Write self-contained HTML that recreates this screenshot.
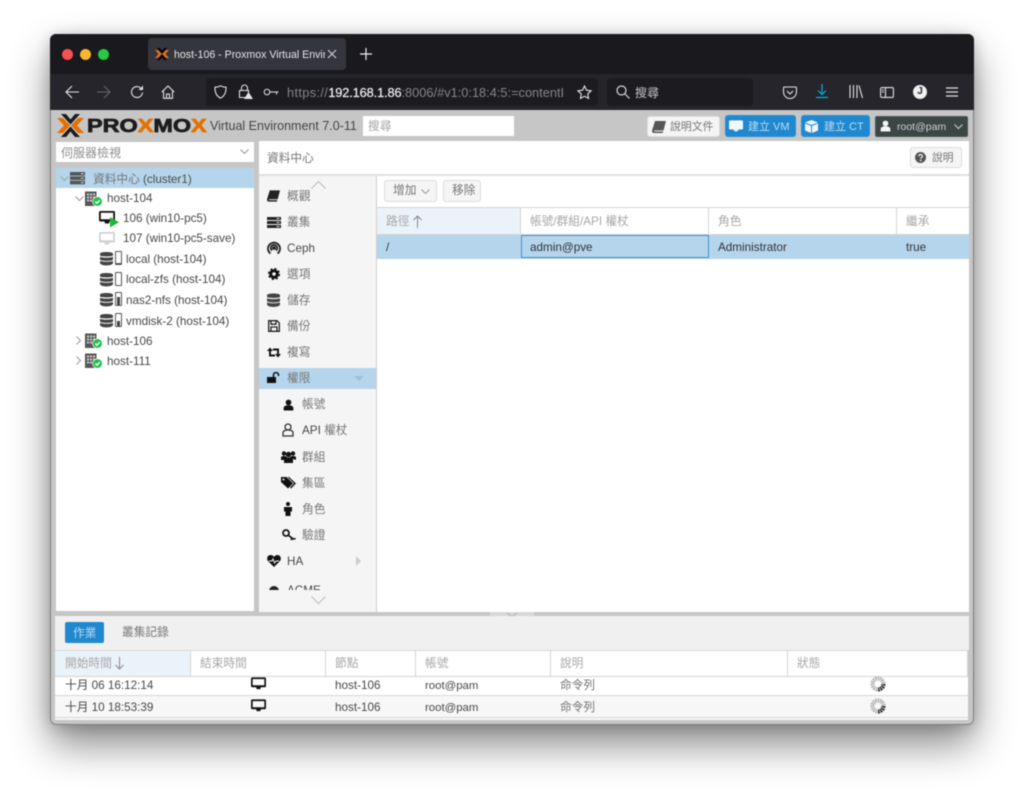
<!DOCTYPE html>
<html lang="zh-TW"><head><meta charset="utf-8"><title>Proxmox</title>
<style>
html,body{margin:0;padding:0;width:1024px;height:792px;overflow:hidden;background:#fff}
body{font-family:"Liberation Sans","Noto Sans CJK TC",sans-serif;font-size:11.7px;color:#484848}
.a,.t,svg.i{position:absolute}
.t{height:16px;line-height:16px;white-space:nowrap;margin-top:1px}
#win{position:absolute;left:50px;top:34px;width:924px;height:691px;border-radius:6px;box-shadow:0 20px 40px rgba(0,0,0,.46),0 2px 16px rgba(0,0,0,.2)}
#root{position:absolute;left:0;top:0;width:1024px;height:792px;filter:blur(.42px)}
.g{color:#8e8e8e}.m{color:#767676}
.btn{position:absolute;box-sizing:border-box;border:1px solid #ddd;border-radius:3px;background:#f5f5f5}
.blue{background:#2088cf;border:1px solid #2a8fd4;border-radius:3px;box-sizing:border-box;position:absolute}
</style></head><body>
<svg width="0" height="0" style="position:absolute">
<defs>
<symbol id="node" viewBox="0 0 18 16"><path d="M0 .5h11.500V15H0z" fill="#555"/><path d="M2 2.500h2v2H2zM5 2.500h2v2H5zM8 2.500h2v2H8zM2 5.500h2v2H2zM5 5.500h2v2H5zM8 5.500h2v2H8zM2 8.500h2v2H2zM5 8.500h2v2H5z" fill="#ccc"/><circle cx="12.500" cy="10.500" r="5.200" fill="#fff"/><circle cx="12.500" cy="10.500" r="4.500" fill="#21bf4b"/><path d="M10.300 10.500l1.700 1.700 2.800-3" fill="none" stroke="#fff" stroke-width="1.400"/></symbol>
<symbol id="db" viewBox="0 0 14 15"><path d="M0 2.300C0 -.1 14 -.1 14 2.300v1.900C14 5.700 0 5.700 0 4.200zM0 5.600c2 1.300 12 1.300 14 0v3.100c-1 1.800-13 1.800-14 0zM0 10c2 1.300 12 1.300 14 0v2.500c-1 3.300-13 3.300-14 0z" fill="#444"/></symbol>
<symbol id="mon" viewBox="0 0 16 13"><path d="M1.500 0h13A1.500 1.500 0 0 1 16 1.500V9a1.500 1.500 0 0 1-1.500 1.500H10.500L10 12.500H6l-.5-2H1.500A1.500 1.500 0 0 1 0 9V1.500A1.500 1.500 0 0 1 1.500 0zM1.800 1.800V8.300h12.400V1.800z" fill="#111" fill-rule="evenodd"/></symbol>
<symbol id="spin" viewBox="0 0 16 16"><circle cx="8" cy="8" r="5.500" fill="none" stroke="#b4b4b4" stroke-width="4.200" stroke-dasharray="1.600 .7"/><path d="M13.500 8A5.500 5.500 0 0 1 8 13.500" fill="none" stroke="#333" stroke-width="4.200" stroke-dasharray="1.600 .7"/></symbol>
<symbol id="user" viewBox="0 0 12 12"><circle cx="6" cy="3.200" r="3.100" fill="currentColor"/><path d="M.7 12V9.300C.7 7.300 3 6.300 6 6.300s5.300 1 5.300 3V12z" fill="currentColor"/></symbol>
<symbol id="book" viewBox="0 0 14 12"><path d="M3 0h11l-2.500 9.500H2.800c-1 0-1 1 0 1H11L10.800 12H2C.3 12-.3 10.500.2 9z" fill="currentColor"/></symbol>
</defs></svg>

<div id="root">
<div id="win"></div>
<div class="a" style="left:50px;top:34px;width:924px;height:691px;border-radius:6px;overflow:hidden;background:#c6c6c6;box-shadow:inset 0 0 0 1px rgba(80,80,80,.6)">
<div class="a" style="left:0;top:0;width:924px;height:40px;background:#19191e"></div>
<div class="a" style="left:0;top:40px;width:924px;height:36px;background:#25252b"></div>
</div>

<!-- traffic -->
<div class="a" style="left:62px;top:48.500px;width:11px;height:11px;border-radius:50%;background:#fb5050"></div>
<div class="a" style="left:80px;top:48.500px;width:11px;height:11px;border-radius:50%;background:#fcb62a"></div>
<div class="a" style="left:98px;top:48.500px;width:11px;height:11px;border-radius:50%;background:#27c93f"></div>
<!-- tab -->
<div class="a" style="left:148px;top:38px;width:198px;height:32px;background:#35353d;border-radius:4px"></div>
<svg class="i" style="left:155px;top:48px" width="14" height="12" viewBox="0 0 27 23"><path d="M0 4h6l7 7.500-7 7.500H0l7-7.500zM27 4h-6l-7 7.500 7 7.500h6l-7-7.500z" fill="#e8711a"/><path d="M4 0h5l4.500 5.500L18 0h5l-9.500 10.500zM4 23h5l4.500-5.500L18 23h5l-9.500-10.500z" fill="#000"/></svg>
<div class="t" style="left:174px;top:47px;margin-top:0;width:151px;overflow:hidden;color:#e6e6e8;font-size:10.600px">host-106 - Proxmox Virtual Envir</div>
<svg class="i" style="left:327px;top:49px" width="10" height="10"><path d="M1 1l8 8M9 1l-8 8" stroke="#d8d8da" stroke-width="1"/></svg>
<svg class="i" style="left:360px;top:48px" width="12" height="12"><path d="M6 0v12M0 6h12" stroke="#f0f0f2" stroke-width="1.200"/></svg>

<!-- nav -->
<svg class="i" style="left:65px;top:85px" width="14" height="14" fill="none" stroke="#e4e4e6" stroke-width="1.100"><path d="M14 7H1M7 1L1 7l6 6"/></svg>
<svg class="i" style="left:97px;top:85px" width="14" height="14" fill="none" stroke="#66666b" stroke-width="1.100"><path d="M0 7h13M7 1l6 6-6 6"/></svg>
<svg class="i" style="left:130px;top:85px" width="14" height="14" fill="none" stroke="#e4e4e6" stroke-width="1.100"><path d="M12.500 7.500A5.500 5.500 0 1 1 10.500 2.800"/><path d="M13 .5v4.500H8.500" fill="#e4e4e6" stroke="none"/></svg>
<svg class="i" style="left:161px;top:85px" width="14" height="14" fill="none" stroke="#e4e4e6" stroke-width="1.100"><path d="M.8 7L7 1l6.200 6M2.500 6v7.300h9V6M5.500 13.300V9h3v4.300"/></svg>
<div class="a" style="left:206px;top:78px;width:392px;height:28px;background:#1b1b20;border-radius:4px"></div>
<svg class="i" style="left:214px;top:85px" width="13" height="14" fill="none" stroke="#e4e4e6" stroke-width="1.100"><path d="M1 2.200Q4 2.200 6.500 .8 9 2.200 12 2.200 12.500 10 6.500 13.200 .5 10 1 2.200z"/></svg>
<svg class="i" style="left:238px;top:84px" width="15" height="15"><path d="M3.500 6V4a3 3 0 0 1 6 0v2M1.500 6.500h9v7h-9z" fill="none" stroke="#e4e4e6" stroke-width="1.100"/><path d="M10.500 8L15 15H6z" fill="#e4e4e6"/></svg>
<svg class="i" style="left:263px;top:88px" width="16" height="8" fill="none" stroke="#e4e4e6" stroke-width="1"><circle cx="4" cy="4" r="2.800"/><path d="M7 4h8.500M13.500 4v2.500"/></svg>
<div class="t" style="left:287px;top:85px;margin-top:0;width:284px;overflow:hidden;font-size:12.800px;color:#85858a;line-height:16px"><span style="letter-spacing:.35px">https://</span><span style="color:#f0f0f2;font-weight:400;-webkit-text-stroke:.2px #f0f0f2;letter-spacing:-.12px">192.168.1.86</span>:8006/#v1:0:18:4:5:=contentI</div>
<svg class="i" style="left:577px;top:85px" width="15" height="14" fill="none" stroke="#e4e4e6" stroke-width="1.100"><path d="M7.500 1l2 4.200 4.600.6-3.400 3.200.9 4.500-4.100-2.300-4.100 2.300.9-4.500L.9 5.800l4.600-.6z"/></svg>
<div class="a" style="left:607px;top:78px;width:146px;height:28px;background:#1b1b20;border-radius:4px"></div>
<svg class="i" style="left:616px;top:85px" width="14" height="14" fill="none" stroke="#d8d8da" stroke-width="1.200"><circle cx="5.500" cy="5.500" r="4.500"/><path d="M9 9l4.500 4.500"/></svg>
<div class="t" style="left:635px;top:84px;color:#c8c8ca;font-size:12px">搜尋</div>
<svg class="i" style="left:783px;top:86px" width="14" height="13" fill="none" stroke="#e4e4e6" stroke-width="1.100"><path d="M1.500 1h11a1 1 0 0 1 1 1v4A6.500 6.500 0 0 1 .5 6V2a1 1 0 0 1 1-1z"/><path d="M4 5l3 3 3-3"/></svg>
<svg class="i" style="left:815px;top:84px" width="14" height="15" fill="none" stroke="#00b3d9" stroke-width="1.200"><path d="M7 0v10M3 6.500l4 4 4-4M1 13.500h12"/></svg>
<svg class="i" style="left:849px;top:85px" width="14" height="13" fill="none" stroke="#e4e4e6" stroke-width="1.100"><path d="M1 0v13M4.500 0v13M8 0v13M10 .5l3.500 12.500"/></svg>
<svg class="i" style="left:880px;top:87px" width="14" height="11" fill="none" stroke="#e4e4e6" stroke-width="1.100"><rect x=".6" y=".6" width="12.800" height="9.800" rx="1.200"/><path d="M5.500 .6v9.800M2 3h2M2 5h2"/></svg>
<div class="a" style="left:913px;top:85px;width:14px;height:14px;border-radius:50%;background:#f0f0f2;color:#25252b;font:bold 10px/14px 'Liberation Sans',sans-serif;text-align:center">J</div>
<svg class="i" style="left:946px;top:87px" width="12" height="10" fill="none" stroke="#e4e4e6" stroke-width="1.200"><path d="M0 1h12M0 5h12M0 9h12"/></svg>

<!-- PVE header -->
<svg class="i" style="left:57px;top:114px" width="27" height="23" viewBox="0 0 27 23"><path d="M0 4h6l7 7.500-7 7.500H0l7-7.500zM27 4h-6l-7 7.500 7 7.500h6l-7-7.500z" fill="#e57000"/><path d="M4 0h5l4.500 5.500L18 0h5l-9.500 10.500zM4 23h5l4.500-5.500L18 23h5l-9.500-10.500z" fill="#1c1c1c"/></svg>
<div class="t" style="left:87px;top:115px;margin-top:0;height:22px;line-height:22px;font-size:18px;font-weight:bold;color:#1c1c1c;transform:scaleX(1.300);transform-origin:0 50%;-webkit-text-stroke:.7px currentColor">PRO<span style="color:#e57000">X</span>MO<span style="color:#e57000">X</span></div>
<div class="t" style="left:210px;top:118px;margin-top:0;font-size:12.500px;color:#444">Virtual Environment 7.0-11</div>
<div class="a" style="left:363px;top:116px;width:151px;height:20px;background:#fff"></div>
<div class="t" style="left:368px;top:118px;color:#a5a5a5">搜尋</div>

<div class="btn" style="left:647px;top:116px;width:73px;height:21px"></div>
<svg class="i" style="left:652px;top:121px;color:#555" width="14" height="12"><use href="#book"/></svg>
<div class="t m" style="left:670px;top:118px;font-size:10.900px">說明文件</div>
<div class="blue" style="left:725px;top:115px;width:71px;height:22px"></div>
<svg class="i" style="left:729px;top:120px" width="14" height="12" viewBox="0 0 16 13"><path d="M1.500 0h13A1.500 1.500 0 0 1 16 1.500V9a1.500 1.500 0 0 1-1.500 1.500H10.500L10 12.500H6l-.5-2H1.500A1.500 1.500 0 0 1 0 9V1.500A1.500 1.500 0 0 1 1.500 0z" fill="#f2f7fb"/></svg>
<div class="t" style="left:748px;top:118px;color:#bcdcf2;font-size:11px">建立 VM</div>
<div class="blue" style="left:801px;top:115px;width:69px;height:22px"></div>
<svg class="i" style="left:805px;top:120px" width="13" height="13" viewBox="0 0 13 13"><path d="M6.500 0L13 2.500 6.500 5 0 2.500zM0 3.500L6 6v7L0 10.500zM13 3.500L7 6v7l6-2.500z" fill="#f2f7fb"/></svg>
<div class="t" style="left:824px;top:118px;color:#bcdcf2;font-size:11px">建立 CT</div>
<div class="a" style="left:875px;top:116px;width:93px;height:21px;background:#3b4645;border:1px solid #4c5857;box-sizing:border-box;border-radius:2px"></div>
<svg class="i" style="left:880px;top:120px;color:#f5f5f5" width="11" height="12"><use href="#user"/></svg>
<div class="t" style="left:897px;top:118px;color:#cfcfcf;font-size:10.500px">root@pam</div>
<svg class="i" style="left:954px;top:124px" width="9" height="6" fill="none" stroke="#cfcfcf"><path d="M.5 .5L4.500 4.500 8.500 .5"/></svg>

<!-- left -->
<div class="a" style="left:56px;top:142px;width:198px;height:20px;background:#fff"></div>
<div class="t g" style="left:61px;top:144px;font-size:12px">伺服器檢視</div>
<svg class="i" style="left:240px;top:149px" width="9" height="6" fill="none" stroke="#999"><path d="M.5 .5L4.500 4.500 8.500 .5"/></svg>
<div class="a" style="left:56px;top:168px;width:198px;height:443px;background:#fff"></div>
<div class="a" style="left:56px;top:168px;width:198px;height:20px;background:#b5d5ec"></div>
<svg class="i" style="left:60px;top:176px" width="9" height="6" fill="none" stroke="#8aa"><path d="M.5 .5L4.500 4.500 8.500 .5"/></svg>
<svg class="i" style="left:70px;top:172px" width="15" height="13"><path d="M0 0h15v3.600H0zM0 4.400h15V8H0zM0 8.800h15v3.600H0z" fill="#555"/><path d="M11 1.800h2.500M11 6.200h2.500M11 10.600h2.500" stroke="#ddd"/></svg>
<div class="t" style="left:93px;top:171px;color:#4c4c4c"><span class="m">資料中心</span> (cluster1)</div>

<svg class="i" style="left:75px;top:196px" width="9" height="6" fill="none" stroke="#999"><path d="M.5 .5L4.500 4.500 8.500 .5"/></svg>
<svg class="i" style="left:85px;top:191px" width="18" height="16"><use href="#node"/></svg>
<div class="t" style="left:107px;top:190px">host-104</div>

<svg class="i" style="left:99px;top:211px" width="16" height="13"><use href="#mon"/></svg>
<svg class="i" style="left:110px;top:217px" width="9" height="11"><path d="M0 0l9 5.200L0 10.500z" fill="#1eb53a"/></svg>
<div class="t" style="left:123px;top:210px">106 (win10-pc5)</div>
<svg class="i" style="left:99px;top:232px" width="16" height="13" viewBox="0 0 16 13"><path d="M1.500 0h13A1.500 1.500 0 0 1 16 1.500V9a1.500 1.500 0 0 1-1.500 1.500H10.500L10 12.500H6l-.5-2H1.500A1.500 1.500 0 0 1 0 9V1.500A1.500 1.500 0 0 1 1.500 0zM1.800 1.800V8.300h12.400V1.800z" fill="#d2d2d2" fill-rule="evenodd"/></svg>
<div class="t" style="left:123px;top:230px">107 (win10-pc5-save)</div>

<svg class="i" style="left:100px;top:251px" width="13" height="15"><use href="#db"/></svg>
<div class="a" style="left:115px;top:251px;width:7px;height:14px;box-sizing:border-box;border:1px solid #555;border-radius:1px"></div><div class="a" style="left:116px;top:263px;width:5px;height:1px;background:#555"></div>
<div class="t" style="left:126px;top:251px">local (host-104)</div>
<svg class="i" style="left:100px;top:272px" width="13" height="15"><use href="#db"/></svg>
<div class="a" style="left:115px;top:272px;width:7px;height:14px;box-sizing:border-box;border:1px solid #555;border-radius:1px"></div>
<div class="t" style="left:126px;top:271px">local-zfs (host-104)</div>
<svg class="i" style="left:100px;top:292px" width="13" height="15"><use href="#db"/></svg>
<div class="a" style="left:115px;top:292px;width:7px;height:14px;box-sizing:border-box;border:1px solid #555;border-radius:1px"></div><div class="a" style="left:117px;top:297px;width:3px;height:8px;background:#444"></div>
<div class="t" style="left:126px;top:292px">nas2-nfs (host-104)</div>
<svg class="i" style="left:100px;top:313px" width="13" height="15"><use href="#db"/></svg>
<div class="a" style="left:115px;top:313px;width:7px;height:14px;box-sizing:border-box;border:1px solid #555;border-radius:1px"></div><div class="a" style="left:117px;top:321px;width:3px;height:5px;background:#444"></div>
<div class="t" style="left:126px;top:313px">vmdisk-2 (host-104)</div>

<svg class="i" style="left:76px;top:336px" width="6" height="10" fill="none" stroke="#999"><path d="M.5 .5L4.500 4.500 .5 8.500"/></svg>
<svg class="i" style="left:85px;top:333px" width="18" height="16"><use href="#node"/></svg>
<div class="t" style="left:107px;top:333px">host-106</div>
<svg class="i" style="left:76px;top:356px" width="6" height="10" fill="none" stroke="#999"><path d="M.5 .5L4.500 4.500 .5 8.500"/></svg>
<svg class="i" style="left:85px;top:353px" width="18" height="16"><use href="#node"/></svg>
<div class="t" style="left:107px;top:353px">host-111</div>

<!-- main panel -->
<div class="a" style="left:259px;top:141px;width:710px;height:471px;background:#fff"></div>
<div class="a" style="left:259px;top:174px;width:710px;height:2px;background:#dedede"></div>
<div class="t m" style="left:267px;top:150px">資料中心</div>
<div class="btn" style="left:910px;top:147px;width:52px;height:21px"></div>
<svg class="i" style="left:915px;top:152px" width="11" height="11"><circle cx="5.500" cy="5.500" r="5.500" fill="#555"/><path d="M3.800 4.300c0-2.300 3.600-2.300 3.600 0 0 1.300-1.700 1.300-1.700 2.500" fill="none" stroke="#fff" stroke-width="1.100"/><path d="M5 7.700h1.400v1.400H5z" fill="#fff"/></svg>
<div class="t m" style="left:932px;top:149px;font-size:10.800px">說明</div>

<!-- sidebar -->
<div class="a" style="left:259px;top:176px;width:117px;height:436px;background:#f5f5f5"></div>
<div class="a" style="left:376px;top:176px;width:1px;height:436px;background:#cfcfcf"></div>
<div class="a" style="left:259px;top:368px;width:117px;height:21px;background:#b5d5ec"></div>
<svg class="i" style="left:311px;top:181px" width="15" height="8" fill="none" stroke="#bbb"><path d="M.5 7.500L7.500 .5l7 7"/></svg>
<svg class="i" style="left:267px;top:190px;color:#222" width="13" height="12"><use href="#book"/></svg>
<div class="t m" style="left:287px;top:188px">概觀</div>
<svg class="i" style="left:267px;top:217px" width="14" height="11"><path d="M0 0h14v3H0zM0 4h14v3H0zM0 8h14v3H0z" fill="#222"/><path d="M9.500 1.500h3M9.500 5.500h3M9.500 9.500h3" stroke="#ddd" stroke-width=".9"/></svg>
<div class="t m" style="left:287px;top:214px">叢集</div>
<svg class="i" style="left:267px;top:241px" width="14" height="14" fill="none" stroke="#222" stroke-width="1.800"><path d="M3.500 12.500a6 6 0 1 1 7 0"/><path d="M5 9.500a3.200 3.200 0 1 1 4 0"/><circle cx="7" cy="7" r="1" fill="#222"/></svg>
<div class="t" style="left:287px;top:240px">Ceph</div>
<svg class="i" style="left:268px;top:268px" width="12" height="12"><circle cx="6" cy="6" r="3.300" fill="none" stroke="#111" stroke-width="3"/><circle cx="6" cy="6" r="5.300" fill="none" stroke="#111" stroke-width="1.500" stroke-dasharray="2.200 2"/></svg>
<div class="t m" style="left:287px;top:266px">選項</div>
<svg class="i" style="left:267px;top:293px" width="13" height="14"><use href="#db"/></svg>
<div class="t m" style="left:287px;top:292px">儲存</div>
<svg class="i" style="left:268px;top:320px" width="12" height="12" fill="none" stroke="#222" stroke-width="1.300"><path d="M.7 .7h8.300l2.300 2.300v8.300H.7z"/><path d="M3 .7v3.500h5V.7M3 11.300V7h6v4.300"/></svg>
<div class="t m" style="left:287px;top:318px">備份</div>
<svg class="i" style="left:267px;top:347px" width="14" height="11" fill="none" stroke="#111" stroke-width="1.900"><path d="M3 3v5.500h5M11 8V2.500H6"/><path d="M0 4l3-3.500 3 3.500zM8 7l3 3.500 3-3.500z" fill="#111" stroke="none"/></svg>
<div class="t m" style="left:287px;top:344px">複寫</div>
<svg class="i" style="left:267px;top:372px" width="13" height="11"><path d="M0 5h9v6H0z" fill="#111"/><path d="M6.500 5V3a2.500 2.500 0 0 1 5 0v1" fill="none" stroke="#111" stroke-width="1.500"/></svg>
<div class="t m" style="left:287px;top:370px">權限</div>
<svg class="i" style="left:354px;top:376px" width="10" height="6"><path d="M0 0h10L5 5z" fill="#9fc0d8"/></svg>

<svg class="i" style="left:283px;top:399px;color:#111" width="11" height="12"><use href="#user"/></svg>
<div class="t m" style="left:302px;top:396px">帳號</div>
<svg class="i" style="left:282px;top:423px" width="12" height="14" fill="none" stroke="#333" stroke-width="1.300"><circle cx="6" cy="4" r="3"/><path d="M1 13V10c0-2 2-3 5-3s5 1 5 3v3z"/></svg>
<div class="t" style="left:302px;top:422px"><span>API</span> <span class="m">權杖</span></div>
<svg class="i" style="left:281px;top:451px" width="15" height="12"><circle cx="3" cy="2.500" r="2.200" fill="#111"/><circle cx="12" cy="2.500" r="2.200" fill="#111"/><circle cx="7.500" cy="3.500" r="2.700" fill="#111"/><path d="M0 9V6.500c0-1 1-1.500 3-1.500s3 .5 3 2v2zM9 7c0-1.500 1-2 3-2s3 .5 3 1.500V9z" fill="#111"/><path d="M3 12V8.500C3 7 5 6.500 7.500 6.500S12 7 12 8.500V12z" fill="#111"/></svg>
<div class="t m" style="left:302px;top:449px">群組</div>
<svg class="i" style="left:281px;top:477px" width="15" height="12"><path d="M0 0h5.500l6.500 6.500L7 11.500 0 5z" fill="#111"/><path d="M8 0l7 6.500-5 5-1-1L13 6.500 6.500 0z" fill="#111"/><circle cx="2.500" cy="2.500" r="1" fill="#f5f5f5"/></svg>
<div class="t m" style="left:302px;top:475px">集區</div>
<svg class="i" style="left:284px;top:502px" width="8" height="14"><circle cx="4" cy="2" r="2" fill="#111"/><path d="M0 5h8v4.500H6.500V14h-5V9.500H0z" fill="#111"/></svg>
<div class="t m" style="left:302px;top:501px">角色</div>
<svg class="i" style="left:282px;top:529px" width="14" height="12" fill="none" stroke="#111" stroke-width="1.700"><circle cx="4" cy="4" r="3"/><path d="M6 6l6 4.500M10 9l-1 2M12.500 10.500l.5-1.500"/></svg>
<div class="t m" style="left:302px;top:527px">驗證</div>
<svg class="i" style="left:267px;top:555px" width="14" height="12"><path d="M7 12L1 6C-1 3 1 0 3.500 0 5 0 6 .5 7 2c1-1.500 2-2 3.500-2C13 0 15 3 13 6z" fill="#111"/><path d="M2 6h3l1-2 1.500 4L9 6h3" fill="none" stroke="#f5f5f5"/></svg>
<div class="t" style="left:287px;top:553px">HA</div>
<svg class="i" style="left:356px;top:556px" width="6" height="10"><path d="M0 0l5 5-5 5z" fill="#ccc"/></svg>
<div class="a" style="left:259px;top:576px;width:117px;height:14px;overflow:hidden"><div class="t" style="left:28px;top:6px">ACME</div><svg class="i" style="left:9px;top:9px" width="12" height="12"><circle cx="6" cy="6" r="5" fill="#222"/></svg></div>
<svg class="i" style="left:311px;top:596px" width="15" height="9" fill="none" stroke="#bbb"><path d="M.5 .5l7 7 7-7"/></svg>

<!-- grid -->
<div class="btn" style="left:384px;top:180px;width:53px;height:22px"></div>
<div class="t m" style="left:393px;top:182px">增加</div>
<svg class="i" style="left:421px;top:189px" width="9" height="6" fill="none" stroke="#999"><path d="M.5 .5L4.500 4.500 8.500 .5"/></svg>
<div class="btn" style="left:443px;top:180px;width:38px;height:22px"></div>
<div class="t m" style="left:452px;top:182px">移除</div>
<div class="a" style="left:377px;top:207px;width:592px;height:1px;background:#d4d4d4"></div>
<div class="a" style="left:377px;top:208px;width:143px;height:26px;background:#eaf3fa"></div>
<div class="a" style="left:520px;top:208px;width:1px;height:26px;background:#d4d4d4"></div>
<div class="a" style="left:708px;top:208px;width:1px;height:26px;background:#d4d4d4"></div>
<div class="a" style="left:896px;top:208px;width:1px;height:26px;background:#d4d4d4"></div>
<div class="a" style="left:377px;top:234px;width:592px;height:1px;background:#d4d4d4"></div>
<div class="t" style="left:386px;top:213px;color:#a6a6a6">路徑</div>
<svg class="i" style="left:413px;top:215px" width="9" height="13" fill="none" stroke="#888"><path d="M4.500 13V1M.5 5l4-4 4 4"/></svg>
<div class="t" style="left:530px;top:213px;color:#a6a6a6">帳號/群組/API 權杖</div>
<div class="t" style="left:718px;top:213px;color:#a6a6a6">角色</div>
<div class="t" style="left:906px;top:213px;color:#a6a6a6">繼承</div>
<div class="a" style="left:377px;top:235px;width:592px;height:24px;background:#b5d5ec"></div>
<div class="a" style="left:521px;top:235px;width:188px;height:23px;box-sizing:border-box;border:1px solid #3a92d2"></div>
<div class="t" style="left:386px;top:239px;color:#333">/</div>
<div class="t" style="left:530px;top:239px;color:#333">admin@pve</div>
<div class="t" style="left:718px;top:239px;color:#333">Administrator</div>
<div class="t" style="left:906px;top:239px;color:#333">true</div>

<!-- splitter -->
<div class="a" style="left:490px;top:612px;width:44px;height:4px;background:#d8d8d8"></div>
<svg class="i" style="left:507px;top:613px" width="10" height="4"><path d="M0 0l5 3.500L10 0" fill="none" stroke="#aaa"/></svg>

<!-- bottom -->
<div class="a" style="left:55px;top:616px;width:914px;height:34px;background:#f0f0f0"></div>
<div class="a" style="left:65px;top:622px;width:39px;height:21px;background:#2088cf;border-radius:2px"></div>
<div class="t" style="left:73px;top:625px;color:#b8daf1">作業</div>
<div class="t m" style="left:122px;top:624px">叢集記錄</div>
<div class="a" style="left:55px;top:650px;width:913px;height:27px;background:#fff;border-top:1px solid #d8d8d8;border-bottom:1px solid #d4d4d4;box-sizing:border-box"></div>
<div class="a" style="left:55px;top:651px;width:135px;height:25px;background:#eaf3fa"></div>
<div class="a" style="left:190px;top:651px;width:1px;height:25px;background:#d4d4d4"></div>
<div class="a" style="left:325px;top:651px;width:1px;height:25px;background:#d4d4d4"></div>
<div class="a" style="left:415px;top:651px;width:1px;height:25px;background:#d4d4d4"></div>
<div class="a" style="left:550px;top:651px;width:1px;height:25px;background:#d4d4d4"></div>
<div class="a" style="left:787px;top:651px;width:1px;height:25px;background:#d4d4d4"></div>
<div class="a" style="left:967px;top:651px;width:1px;height:25px;background:#d4d4d4"></div>
<div class="t" style="left:65px;top:655px;color:#a6a6a6">開始時間</div>
<svg class="i" style="left:115px;top:657px" width="9" height="13" fill="none" stroke="#888"><path d="M4.500 0v12M.5 8l4 4 4-4"/></svg>
<div class="t" style="left:200px;top:655px;color:#a6a6a6">結束時間</div>
<div class="t" style="left:335px;top:655px;color:#a6a6a6">節點</div>
<div class="t" style="left:425px;top:655px;color:#a6a6a6">帳號</div>
<div class="t" style="left:560px;top:655px;color:#a6a6a6">說明</div>
<div class="t" style="left:797px;top:655px;color:#a6a6a6">狀態</div>

<div class="a" style="left:55px;top:677px;width:913px;height:18px;background:#fff"></div>
<div class="a" style="left:55px;top:695px;width:913px;height:1px;background:#d8d8d8"></div>
<div class="a" style="left:55px;top:696px;width:913px;height:21px;background:#f7f7f7"></div>
<div class="a" style="left:55px;top:717px;width:913px;height:1px;background:#d8d8d8"></div>
<div class="a" style="left:55px;top:718px;width:913px;height:2px;background:#f7f7f7"></div>

<div class="t" style="left:65px;top:677px">十月 06 16:12:14</div>
<svg class="i" style="left:251px;top:677px" width="15" height="13"><use href="#mon"/></svg>
<div class="t" style="left:335px;top:677px">host-106</div>
<div class="t" style="left:425px;top:677px;font-size:11.400px">root@pam</div>
<div class="t m" style="left:560px;top:677px">命令列</div>
<svg class="i" style="left:870px;top:676px" width="16" height="16"><use href="#spin"/></svg>

<div class="t" style="left:65px;top:699px">十月 10 18:53:39</div>
<svg class="i" style="left:251px;top:699px" width="15" height="13"><use href="#mon"/></svg>
<div class="t" style="left:335px;top:699px">host-106</div>
<div class="t" style="left:425px;top:699px;font-size:11.400px">root@pam</div>
<div class="t m" style="left:560px;top:699px">命令列</div>
<svg class="i" style="left:870px;top:698px" width="16" height="16"><use href="#spin"/></svg>
</div>
</body></html>
